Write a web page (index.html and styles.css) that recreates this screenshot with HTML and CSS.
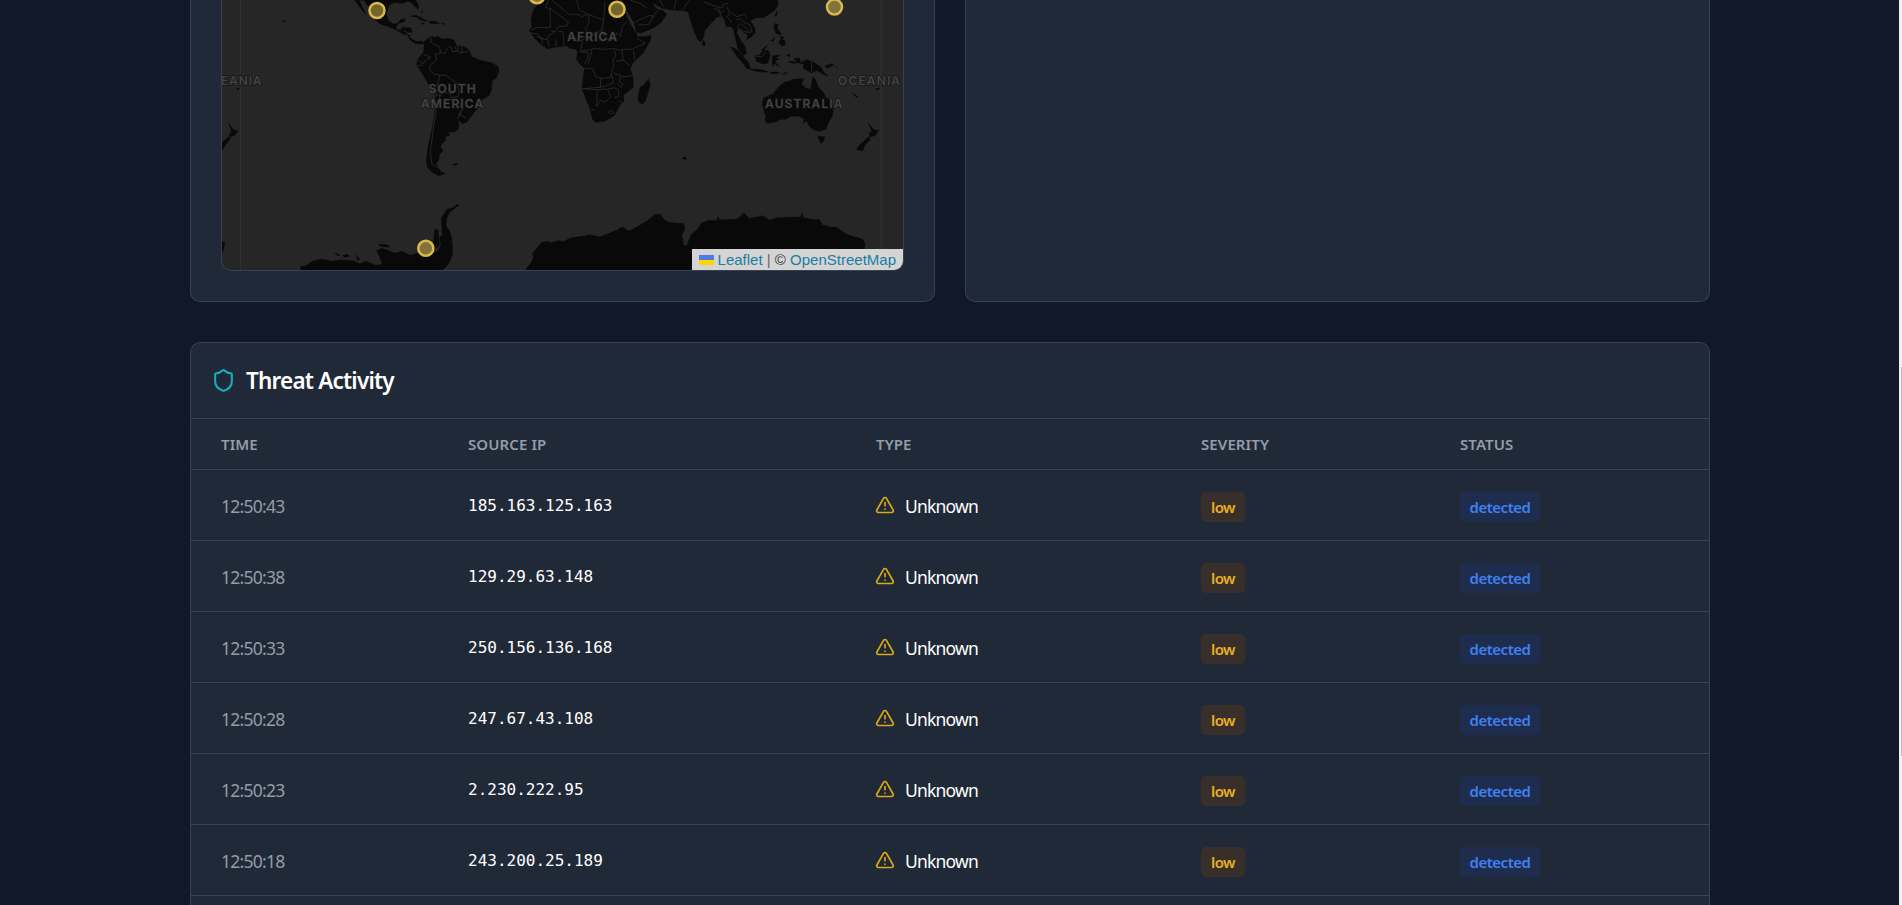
FILE: index.html
```html
<!DOCTYPE html>
<html lang="en">
<head>
<meta charset="utf-8">
<title>Threat Activity</title>
<link rel="stylesheet" href="styles.css">
</head>
<body>
<svg class="defs" aria-hidden="true">
  <symbol id="shield" viewBox="0 0 24 24"><path d="M20 13c0 5-3.5 7.5-7.66 8.95a1 1 0 0 1-.67-.01C7.5 20.5 4 18 4 13V6a1 1 0 0 1 1-1c2 0 4.500-1.200 6.240-2.720a1.170 1.170 0 0 1 1.520 0C14.510 3.810 17 5 19 5a1 1 0 0 1 1 1z"/></symbol>
  <symbol id="warn" viewBox="0 0 24 24"><path d="m21.730 18-8-14a2 2 0 0 0-3.480 0l-8 14A2 2 0 0 0 4 21h16a2 2 0 0 0 1.730-3"/><path d="M12 9v4"/><path d="M12 17h.01"/></symbol>
</svg>
<main class="page">
  <div class="panels">
    <section class="card map-card">
      <div class="map">
        <svg class="world" viewBox="222 0 681 270">
          <g transform="translate(180 0) scale(.33333)">
            <path class="meridian" d="M181 0V812"/>
            <g class="land">
              <path d="M524 0L548 33L559 43L546 20L537 0H552L567 22L575 50L600 71L630 82L650 90L668 102L688 105L695 117L710 125L727 124L732 132L716 131L704 130L688 117L684 105L676 102L681 97L697 97L692 83L675 84L668 80L662 91L650 88L648 82L655 70L672 65L676 56L661 59L655 70L640 72L625 62L619 42L627 15L643 7L668 10L685 3L697 10L706 20L714 28L716 18L706 0Z"/>
              <path d="M692 49L708 46L728 56L743 64L722 60L709 51ZM747 65L765 63L778 70L765 71L749 70ZM722 71L733 70L734 73ZM785 70L793 71L790 74ZM725 33L729 36L726 39ZM307 62L316 63L314 67Z"/>
              <path d="M732 126L752 109L765 112L775 108L785 118L806 115L822 121L830 138L848 139L866 148L876 171L900 181L934 188L953 199L957 212L949 234L936 243L935 267L928 286L905 300L896 321L878 343L860 367L846 371L833 357L837 374L835 387L824 395L806 397L808 408L795 409L797 421L784 433L782 442L789 452L778 463L777 477L769 491L774 504L784 516L795 521L776 527L755 516L743 501L739 483L742 460L746 434L752 404L757 382L763 350L766 318L767 288L762 268L743 249L733 231L718 208L710 195L713 179L720 169L731 157L733 140Z"/>
              <path d="M817 493L834 491L827 497ZM146 370L155 383L163 390L175 392L165 405L150 411L148 402L155 396ZM146 410L151 416L138 432L125 451V428ZM125 722L134 730L129 754L125 756ZM170 266L178 265L174 270Z"/>
              <path d="M362 809L363 799L378 798L397 784L425 777L455 784L477 780L520 782L539 791L558 784L588 796L607 793L603 780L590 752L606 745L646 760L665 754L690 766L715 760L748 766L775 752L783 735L779 713L787 704L784 655L800 629L819 623L829 614L837 615L821 628L808 637L800 655L798 678L807 690L815 715L818 760L810 783L798 800L786 812H362ZM759 738L765 687L774 691L778 735L770 744ZM596 734L614 733L628 738L624 742L602 739ZM465 759L475 763L479 767L471 766ZM488 767L502 763L508 769L495 772ZM527 766L539 776L535 782Z"/>
            </g>
            <g class="borders">
              <path d="M650 89L659 81M671 92L681 97M688 109L697 117M753 110L752 126L764 135L778 139L782 158L765 164L771 180L751 194L749 208L762 222L780 226L798 225L814 239L830 248L837 271L834 290L814 293L810 279L788 278L779 290L770 280M713 179L728 190L739 179L752 172L731 164M710 195L722 198L739 179M783 158L795 161L801 145L810 138L819 155L832 154L825 141M832 138L838 158L860 156L866 147M846 139V156M780 226L773 250L780 268L779 290L766 318L768 344L760 382L756 420L751 455L755 490L774 503M810 295L820 310L839 318L849 324L833 357M849 324L836 343L858 353M773 250L769 290"/>
            </g>
            <text x="123" y="255" class="place" text-anchor="start">EANIA</text>
            <text x="818" y="278" class="place">SOUTH</text>
            <text x="818" y="324" class="place">AMERICA</text>
          </g>
          <g transform="translate(520 0) scale(.33333)">
            <path class="meridian" d="M1083 0V812"/>
            <g class="land">
              <path d="M66 0L44 25L36 43L33 60L36 78L29 93L44 115L64 134L82 146L105 142L140 137L151 146L166 147L174 157L169 178L180 192L193 205L191 225L186 264L197 294L207 318L219 360L228 367L258 362L284 345L298 318L312 302L310 285L339 263L339 228L330 207L339 188L370 158L390 124L393 107L352 112L350 101L334 78L320 50L311 25L300 0Z"/>
              <path d="M306 0L323 35L341 65L350 96L363 99L400 83L422 69L440 43L427 31L413 29L404 20L396 8L382 0ZM380 0H772L774 14L765 30L742 46L728 53L708 53L690 62L704 82L706 97L694 111L680 119L684 105L672 98L663 87L654 82L650 99L662 121L674 138L680 160L670 166L655 150L647 118L640 86L630 79L619 81L614 60L606 48L590 52L570 73L554 92L550 113L541 125L532 116L518 80L508 48L505 35L482 31L460 31L440 27L425 24L405 12Z"/>
              <path d="M549 120L556 128L554 138L547 135ZM385 237L391 253L377 301L369 312L358 308L354 296L360 262L373 254ZM632 142L648 147L669 169L686 189L691 207L680 206L668 188L652 170ZM690 208L706 207L727 210L745 216L729 216L706 213ZM751 217L766 216L779 218L771 221L752 220ZM785 223L803 216L798 221ZM704 167L719 165L728 153L745 151L750 165L744 189L730 192L710 184ZM758 168L781 165L766 173L778 178L764 182L778 200L763 190L758 199L757 181ZM725 149L742 137L731 152ZM771 33L771 46L764 48ZM764 71L775 73L772 86L783 100L781 105L768 99L762 86ZM779 119L793 120L797 134L785 137L778 129ZM754 123L764 112L760 123ZM781 109L792 112L785 119ZM680 66L688 64L686 71L681 71ZM800 165L808 162L809 171ZM805 185L820 184L833 188L820 190ZM822 176L838 174L842 188L860 179L878 185L902 201L913 219L925 228L905 221L892 211L873 218L849 204L852 193L833 188ZM915 198L935 191L940 196L921 205ZM944 198L953 205ZM998 280L1013 290L1009 292ZM1066 267L1080 264L1072 270Z"/>
              <path d="M728 303L733 293L758 283L776 261L794 246L809 244L819 238L850 236L844 253L860 266L872 267L879 230L887 240L895 263L909 275L918 293L932 301L940 330L936 351L927 364L918 387L899 394L880 389L866 376L861 362L849 370L853 358L838 348L812 349L796 358L780 358L766 366L741 370L735 361L738 350L728 316ZM893 409L914 410L909 425L902 430ZM1045 369L1056 383L1064 391L1075 391L1066 406L1051 411L1047 399L1056 395ZM1046 410L1051 420L1034 435L1028 452L1010 449L1018 436ZM487 473L497 471L499 477L490 478Z"/>
              <path d="M14 812L36 785L40 771L37 761L64 728L82 724L93 728L114 722L130 725L151 714L189 709L207 704L240 711L294 689L306 680L326 694L353 680L382 662L405 644L420 642L434 660L450 668L491 671L494 690L485 705L491 738L501 736L514 704L533 687L545 669L566 661L588 663L594 651L600 660L653 657L671 638L688 655L711 652L728 647L748 661L771 653L842 651L846 638L850 653L873 658L898 659L906 674L930 681L949 682L979 703L1002 710L1028 718L1034 728L1033 812Z"/>
            </g>
            <g class="borders">
              <path d="M86 0L76 23L90 25L91 83L48 83L34 90M90 25L145 65L141 78L116 80L105 95L93 93M95 0L145 42L177 44L184 51L201 42L177 27L170 0M201 42L251 60L255 5M206 43L207 71L195 86L206 100L188 120L171 125L165 112L143 107M116 95L129 95L132 139M108 118V140M83 118L88 140M50 110L68 113L66 132M30 98L55 103L62 116L80 119L84 108L105 95M251 60L246 85L250 107L262 118L280 119L291 98L302 109L305 84L320 64M212 103L231 101L246 89M188 120L182 153L205 151L220 145L247 148L272 146L288 147L303 151L318 147L335 149L345 143L376 130L351 115M180 155L205 158L203 176L193 192M217 148L204 193M190 205L217 205L228 231L241 234L242 262L188 266M241 235L272 233L274 220L281 249L265 255L242 262M282 149L288 168L279 179L281 196L275 210L286 223L303 226L309 236M287 184L310 180L330 198M305 151L310 178M340 152L345 182M309 230L339 227M300 228L298 247L309 252L302 262L291 250M188 266L212 268L233 269L261 267L273 290L257 305L240 302L230 319L232 269M214 329L225 331M264 267L283 263L297 271L295 290L282 293M298 300L305 310M268 332L277 332L281 338L271 343L265 337L268 332M320 50L340 70L355 61L386 47L401 48L413 32M355 75L387 73L401 48M330 0L360 10L380 23M420 0L430 20M468 0L461 32M489 29L498 14L510 0M550 5L580 17L606 24L611 12L625 10M582 25L598 34L603 50M594 22L600 38L612 32M619 20L630 38L622 50L635 69M635 38L650 50L672 43L680 52M649 60L660 55L672 67L689 74L696 95L683 98M650 81L662 71L686 89L681 97L667 92M704 168L725 170L739 156M875 184V216"/>
            </g>
            <text x="218" y="124" class="place">AFRICA</text>
            <text x="1049" y="255" class="place">OCEANIA</text>
            <text x="853" y="325" class="place">AUSTRALIA</text>
          </g>
          <g class="pins">
            <circle cx="377" cy="10.500" r="7.500"/><circle cx="537" cy="-4.300" r="7.500"/><circle cx="425.800" cy="248.300" r="7.500"/><circle cx="617" cy="9.300" r="7.500"/><circle cx="834.500" cy="7" r="7.500"/>
          </g>
        </svg>
        <div class="attribution"><svg class="flag" viewBox="0 0 15 10"><path fill="#4c7be1" d="M0 0h15v5H0z"/><path fill="#ffd500" d="M0 5h15v5H0z"/></svg><a>Leaflet</a> <span class="bar">|</span> © <a>OpenStreetMap</a></div>
      </div>
    </section>
    <section class="card"></section>
  </div>
  <section class="card activity">
    <header class="title"><svg class="shield"><use href="#shield"/></svg><h2>Threat Activity</h2></header>
    <div class="row head"><span>TIME</span><span>SOURCE IP</span><span>TYPE</span><span>SEVERITY</span><span>STATUS</span></div>
    <div class="row"><span class="time">12:50:43</span><span class="ip">185.163.125.163</span><span class="type"><svg class="warn"><use href="#warn"/></svg><span>Unknown</span></span><span><b class="badge low">low</b></span><span><b class="badge detected">detected</b></span></div>
    <div class="row"><span class="time">12:50:38</span><span class="ip">129.29.63.148</span><span class="type"><svg class="warn"><use href="#warn"/></svg><span>Unknown</span></span><span><b class="badge low">low</b></span><span><b class="badge detected">detected</b></span></div>
    <div class="row"><span class="time">12:50:33</span><span class="ip">250.156.136.168</span><span class="type"><svg class="warn"><use href="#warn"/></svg><span>Unknown</span></span><span><b class="badge low">low</b></span><span><b class="badge detected">detected</b></span></div>
    <div class="row"><span class="time">12:50:28</span><span class="ip">247.67.43.108</span><span class="type"><svg class="warn"><use href="#warn"/></svg><span>Unknown</span></span><span><b class="badge low">low</b></span><span><b class="badge detected">detected</b></span></div>
    <div class="row"><span class="time">12:50:23</span><span class="ip">2.230.222.95</span><span class="type"><svg class="warn"><use href="#warn"/></svg><span>Unknown</span></span><span><b class="badge low">low</b></span><span><b class="badge detected">detected</b></span></div>
    <div class="row"><span class="time">12:50:18</span><span class="ip">243.200.25.189</span><span class="type"><svg class="warn"><use href="#warn"/></svg><span>Unknown</span></span><span><b class="badge low">low</b></span><span><b class="badge detected">detected</b></span></div>
  </section>
</main>
<div class="scroll-track"><div class="scroll-thumb"></div></div>
</body>
</html>
```
FILE: styles.css
```css
* { box-sizing: border-box; }
body {
  margin: 0;
  height: 905px;
  overflow: hidden;
  display: flex;
  background: #111827;
  color: #fff;
  font-family: "Noto Sans", "Open Sans", sans-serif;
}
.defs { position: absolute; width: 0; height: 0; }
.page { flex: 1; padding: 0 189px 0 190px; }
.panels { display: grid; grid-template-columns: 1fr 1fr; gap: 30px; height: 302px; }
.card { background: #1f2937; border: 1px solid #374151; border-radius: 10px; }
.panels .card { border-top: 0; border-radius: 0 0 10px 10px; }
.map-card { padding: 0 30px 30px; }
.map {
  position: relative;
  height: 271px;
  border: 1px solid #374151;
  border-top: 0;
  border-radius: 0 0 10px 10px;
  background: #262626;
  overflow: hidden;
}
.world { display: block; width: 681px; height: 270px; }
.land { fill: #090909; stroke: #090909; stroke-width: 1.5; stroke-linejoin: round; }
.borders { fill: none; stroke: #2b2b2b; stroke-width: 2.6; stroke-linejoin: round; }
.meridian { stroke: #333; stroke-width: 3; }
.place {
  font: 600 36px Inter, sans-serif;
  letter-spacing: 3.4px;
  text-anchor: middle;
  fill: #434343;
  stroke: #151515;
  stroke-width: 4px;
  paint-order: stroke;
}
.place[text-anchor="start"] { text-anchor: start; letter-spacing: 2.6px; }
.pins circle { fill: #dcc050; fill-opacity: .5; stroke: #d9b94c; stroke-width: 2.5; }
.attribution {
  position: absolute;
  right: 0;
  bottom: 0;
  height: 21px;
  padding: 0 7px 0 7px;
  background: #d4d4d4;
  color: #333;
  font: 15px/21px "Liberation Sans", Arial, sans-serif;
  white-space: nowrap;
}
.attribution a { color: #1c7ca1; }
.bar { color: #666; }
.flag { width: 15px; height: 10px; margin-right: 4px; }
.activity { margin-top: 40px; height: 600px; }
.title {
  display: flex;
  align-items: center;
  gap: 10px;
  height: 76px;
  padding-left: 20px;
  border-bottom: 1px solid #374151;
}
.title h2 { margin: 0; padding-top: 1px; font-size: 22.500px; font-weight: 600; line-height: 30px; letter-spacing: -.8px; }
.shield { width: 25px; height: 25px; fill: none; stroke: #1aaac4; stroke-width: 2; stroke-linecap: round; stroke-linejoin: round; }
.row {
  display: grid;
  grid-template-columns: 247px 408px 325px 259px 1fr;
  align-items: center;
  height: 71px;
  padding-left: 30px;
  border-bottom: 1px solid #374151;
  font-size: 17.500px;
}
.head { height: 51px; color: #949ca8; font-size: 15px; font-weight: 600; letter-spacing: .1px; }
.time { color: #949ca8; letter-spacing: -.75px; padding-top: 1px; }
.ip { font-family: "DejaVu Sans Mono", monospace; font-size: 16px; }
.type { display: flex; align-items: center; gap: 10px; margin-left: -1px; letter-spacing: -.8px; }
.type span { padding-top: 1px; }
.warn { width: 20px; height: 20px; fill: none; stroke: #dba917; stroke-width: 2; stroke-linecap: round; stroke-linejoin: round; }
.badge {
  display: block;
  width: 44px;
  height: 30px;
  margin-top: 4px;
  border-radius: 5px;
  font-size: 15px;
  font-weight: 600;
  line-height: 30px;
  text-align: center;
  letter-spacing: -.5px;
}
.low { background: #382f2b; color: #eab020; }
.detected { width: 80px; background: #1e2c4e; color: #4080f0; }
.scroll-track { width: 3px; height: 905px; padding: 367px 0 0 2px; background: #f0f0f3; }
.scroll-thumb { height: 389px; background: #c1c1c1; }
```
